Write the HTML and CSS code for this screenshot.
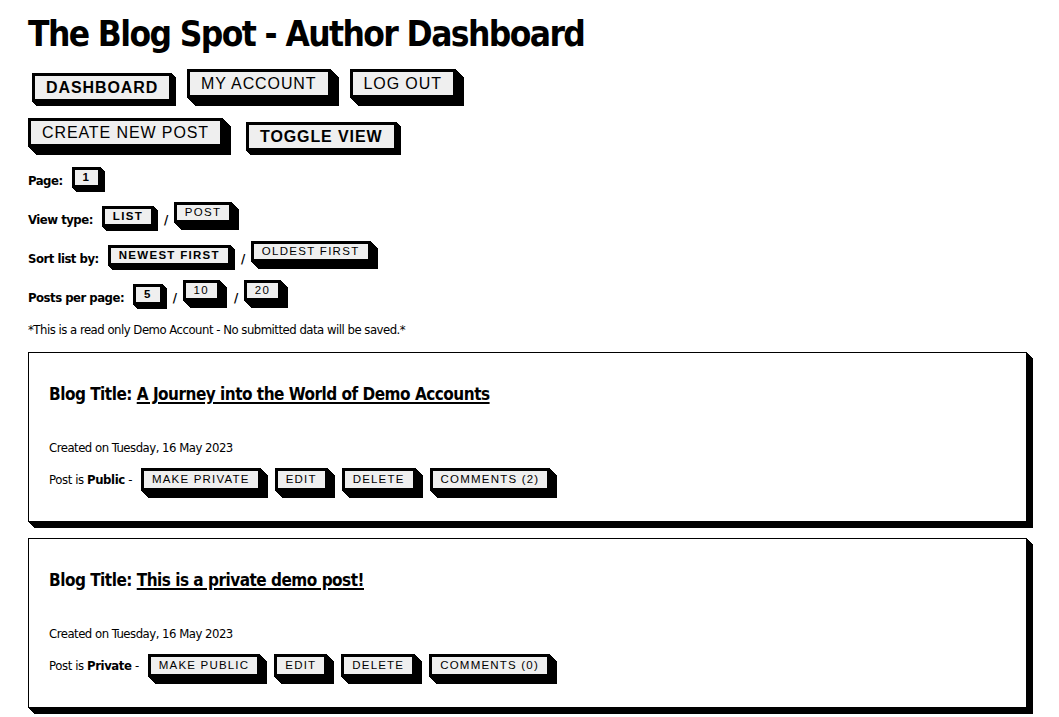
FILE: index.html
```html
<!DOCTYPE html>
<html lang="en">
<head>
<meta charset="utf-8">
<title>The Blog Spot - Author Dashboard</title>
<link rel="stylesheet" href="styles.css">
</head>
<body>
<div class="page">
  <h1 class="site-title">The Blog Spot - Author Dashboard</h1>

  <nav class="nav-row">
    <button class="btn btn-lg is-active">Dashboard</button>
    <button class="btn btn-lg">My Account</button>
    <button class="btn btn-lg">Log Out</button>
  </nav>
  <div class="nav-row nav-row-second">
    <button class="btn btn-lg">Create New Post</button>
    <button class="btn btn-lg is-active">Toggle View</button>
  </div>

  <div class="filters">
    <div class="filter-row">
      <span class="filter-label">Page:</span>
      <button class="btn btn-sm is-active">1</button>
    </div>
    <div class="filter-row">
      <span class="filter-label">View type:</span>
      <button class="btn btn-sm is-active">List</button>
      <span class="sep">/</span>
      <button class="btn btn-sm">Post</button>
    </div>
    <div class="filter-row">
      <span class="filter-label">Sort list by:</span>
      <button class="btn btn-sm is-active">Newest First</button>
      <span class="sep">/</span>
      <button class="btn btn-sm">Oldest First</button>
    </div>
    <div class="filter-row">
      <span class="filter-label">Posts per page:</span>
      <button class="btn btn-sm is-active">5</button>
      <span class="sep">/</span>
      <button class="btn btn-sm">10</button>
      <span class="sep">/</span>
      <button class="btn btn-sm">20</button>
    </div>
  </div>

  <p class="notice">*This is a read only Demo Account - No submitted data will be saved.*</p>

  <article class="card">
    <h2 class="card-title">Blog Title: <a href="#">A Journey into the World of Demo Accounts</a></h2>
    <p class="card-date">Created on Tuesday, 16 May 2023</p>
    <div class="card-actions">
      <span class="card-status">Post is <b>Public</b> -</span>
      <button class="btn btn-post">Make Private</button>
      <button class="btn btn-post">Edit</button>
      <button class="btn btn-post">Delete</button>
      <button class="btn btn-post">Comments (2)</button>
    </div>
  </article>

  <article class="card">
    <h2 class="card-title">Blog Title: <a href="#">This is a private demo post!</a></h2>
    <p class="card-date">Created on Tuesday, 16 May 2023</p>
    <div class="card-actions">
      <span class="card-status">Post is <b>Private</b> -</span>
      <button class="btn btn-post">Make Public</button>
      <button class="btn btn-post">Edit</button>
      <button class="btn btn-post">Delete</button>
      <button class="btn btn-post">Comments (0)</button>
    </div>
  </article>
</div>
</body>
</html>
```

FILE: styles.css
```css
body {
  margin: 0;
  background: #ffffff;
  color: #000000;
  font-family: "DejaVu Sans Condensed", "Liberation Sans", sans-serif;
}

.page {
  padding: 8px 28px 40px;
}

.site-title {
  margin: 0;
  font-size: 35px;
  line-height: 52px;
  font-weight: 700;
  letter-spacing: -1.6px;
}

/* ---------- buttons ---------- */
.btn {
  font-family: "Liberation Sans", Arial, sans-serif;
  background: #efefef;
  color: #000000;
  border: 3px solid #000000;
  border-radius: 0;
  text-transform: uppercase;
  cursor: pointer;
  white-space: nowrap;
  box-shadow:
    1px 1px 0 #000, 2px 2px 0 #000, 3px 3px 0 #000, 4px 4px 0 #000,
    5px 5px 0 #000, 6px 6px 0 #000, 7px 7px 0 #000;
}

.btn.is-active {
  font-weight: 700;
  transform: translate(4px, 4px);
  box-shadow:
    1px 1px 0 #000, 2px 2px 0 #000, 3px 3px 0 #000, 4px 4px 0 #000;
}

.btn-lg {
  font-size: 16px;
  line-height: 17px;
  padding: 3px 11px;
  letter-spacing: 0.9px;
  box-shadow:
    1px 1px 0 #000, 2px 2px 0 #000, 3px 3px 0 #000, 4px 4px 0 #000,
    5px 5px 0 #000, 6px 6px 0 #000, 7px 7px 0 #000, 8px 8px 0 #000;
}

.btn-sm {
  font-size: 11.5px;
  line-height: 13px;
  padding: 1px 8px;
  letter-spacing: 1.3px;
  margin-right: 14px;
}

.btn-post {
  font-size: 11.5px;
  line-height: 13px;
  padding: 2px 8px;
  letter-spacing: 1.2px;
  margin-right: 14px;
}

/* ---------- nav ---------- */
.nav-row {
  display: flex;
  align-items: flex-start;
  gap: 19px;
  margin-top: 9px;
}

.nav-row-second {
  margin-top: 20px;
}

/* ---------- filters ---------- */
.filters {
  display: flex;
  flex-direction: column;
  gap: 11px;
  margin-top: 16px;
}

.filter-row {
  display: flex;
  align-items: flex-start;
  font-size: 13px;
  line-height: 20px;
  font-weight: 700;
  letter-spacing: -0.5px;
}

.filter-label {
  padding-top: 8px;
  margin-right: 5px;
}

.sep {
  padding-top: 8px;
  margin-right: 6px;
}

.notice {
  margin: 12px 0 0;
  font-size: 13px;
  line-height: 20px;
  letter-spacing: -0.5px;
}

/* ---------- cards ---------- */
.card {
  margin: 12px 4px 16px 0;
  padding: 27px 20px 30px;
  border: 1px solid #000000;
  background: #ffffff;
  box-shadow:
    1px 1px 0 #000, 2px 2px 0 #000, 3px 3px 0 #000,
    4px 4px 0 #000, 5px 5px 0 #000, 6px 6px 0 #000;
}

.card + .card {
  margin-top: 0;
}

.card-title {
  margin: 0;
  font-size: 17px;
  line-height: 28px;
  font-weight: 700;
  letter-spacing: -0.5px;
}

.card-title a {
  color: #000000;
  text-decoration: underline;
  text-decoration-thickness: 2px;
  text-underline-offset: 2px;
}

.card-date {
  margin: 30px 0 0;
  font-size: 13px;
  line-height: 20px;
  letter-spacing: -0.5px;
}

.card-actions {
  display: flex;
  align-items: center;
  margin-top: 10px;
  font-size: 13px;
  line-height: 20px;
  letter-spacing: -0.4px;
}

.card-status {
  margin-right: 9px;
}

.card-status b {
  font-weight: 700;
}
```
